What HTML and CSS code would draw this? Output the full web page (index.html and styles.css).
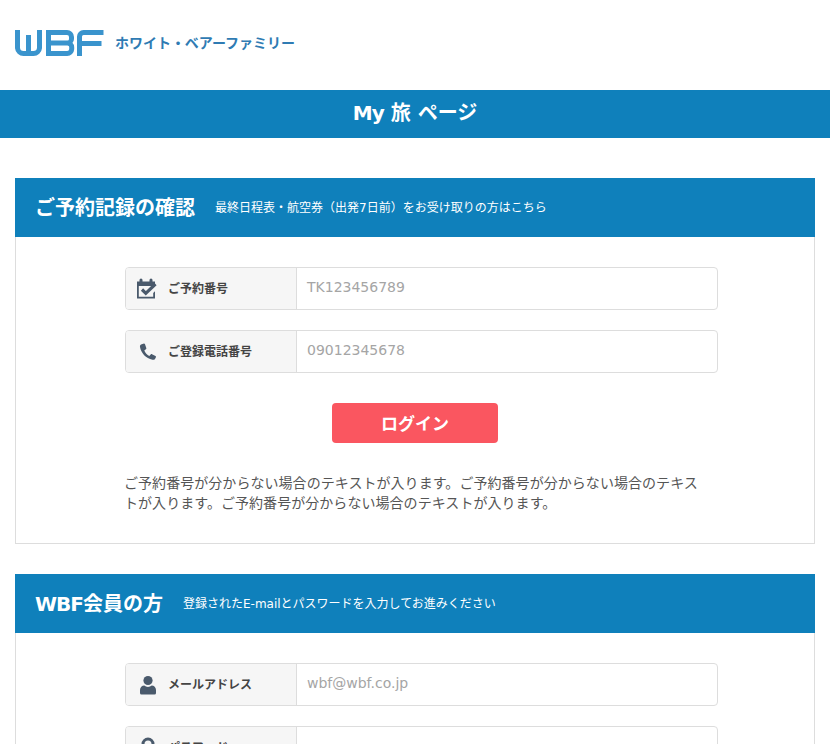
FILE: index.html
```html
<!DOCTYPE html>
<html lang="ja">
<head>
<meta charset="utf-8">
<title>My 旅 ページ</title>
<link rel="stylesheet" href="styles.css">
</head>
<body>
<header class="site-header">
  <svg class="logo" viewBox="0 0 89 26" width="89" height="26" aria-label="WBF">
    <g fill="none" stroke="#3a94cd" stroke-width="5">
      <path d="M2.500 0V18a6 6 0 0 0 6 5.500h10a6 6 0 0 0 6-5.500V0M13.500 5V23"/>
      <path d="M33.500 0V26M33.500 2.500H52a4.500 4.500 0 0 1 4.500 4.500v2a4 4 0 0 1-4 4H33.500M52.500 13a4.200 4.200 0 0 1 4.200 4.200v2a4.500 4.500 0 0 1-4.500 4.300H33.500"/>
      <path d="M88.500 2.500H68.500a4 4 0 0 0-4 4V26M64.500 13.500H86.500"/>
    </g>
  </svg>
  <span class="brand">ホワイト・ベアーファミリー</span>
</header>
<h1 class="page-title"><span class="latin">My</span> 旅 ページ</h1>
<main class="content">
  <section class="card">
    <div class="card-head">
      <h2>ご予約記録の確認</h2>
      <p>最終日程表・航空券（出発7日前）をお受け取りの方はこちら</p>
    </div>
    <div class="card-body">
      <div class="field">
        <div class="field-label">
          <svg class="icon" viewBox="1 0 22 22" width="22" height="22"><path fill="#4a5a6c" d="M1 3.500h2.500V2a1.500 1.500 0 0 1 3 0v1.500h7V2a1.500 1.500 0 0 1 3 0v1.500H19v4h-1.800V8H2.800v10.800h14.400V15L19 13.200v7.300H1z"/><path fill="none" stroke="#4a5a6c" stroke-width="3.200" d="M6 11.500l3.800 3.800L19.500 6"/></svg>
          <span>ご予約番号</span>
        </div>
        <div class="field-value">TK123456789</div>
      </div>
      <div class="field">
        <div class="field-label">
          <svg class="icon" viewBox="0 0 22 22" width="22" height="22"><path fill="#4a5a6c" d="M4 3.500 7 2.500C7.500 2.500 7.800 2.800 8 3.200L9.300 7C9.500 7.500 9.300 8 8.900 8.300L7.300 9.500C8.300 12 10 13.800 12.300 15L13.700 13.500C14 13.100 14.600 13 15 13.200L18.500 15C18.900 15.200 19.100 15.700 19 16.100L18 18C17.500 18.700 16.500 19 15.500 18.800 9 17.500 4 12 3 6 2.800 5 3.200 4 4 3.500Z"/></svg>
          <span>ご登録電話番号</span>
        </div>
        <div class="field-value">09012345678</div>
      </div>
      <button class="login" type="button">ログイン</button>
      <p class="note">ご予約番号が分からない場合のテキストが入ります。ご予約番号が分からない場合のテキストが入ります。ご予約番号が分からない場合のテキストが入ります。</p>
    </div>
  </section>
  <section class="card">
    <div class="card-head member">
      <h2><span class="latin">WBF</span>会員の方</h2>
      <p>登録されたE-mailとパスワードを入力してお進みください</p>
    </div>
    <div class="card-body">
      <div class="field">
        <div class="field-label">
          <svg class="icon" viewBox="0 0 22 22" width="22" height="22"><circle cx="11" cy="6.500" r="4.600" fill="#4a5a6c"/><path fill="#4a5a6c" d="M4.500 20.500A1.500 1.500 0 0 1 3 19v-3c0-2.500 2-4.500 4.300-4.500 1 .9 2.300 1.400 3.700 1.400s2.700-.5 3.700-1.400c2.300 0 4.300 2 4.300 4.500v3a1.500 1.500 0 0 1-1.500 1.500z"/></svg>
          <span>メールアドレス</span>
        </div>
        <div class="field-value">wbf@wbf.co.jp</div>
      </div>
      <div class="field">
        <div class="field-label">
          <svg class="icon" viewBox="0 0 22 22" width="22" height="22"><circle cx="11" cy="7" r="5" fill="none" stroke="#4a5a6c" stroke-width="3"/><rect x="3" y="10" width="16" height="11" rx="2" fill="#4a5a6c"/></svg>
          <span>パスワード</span>
        </div>
        <div class="field-value"></div>
      </div>
    </div>
  </section>
</main>
</body>
</html>
```
FILE: styles.css
```css
* { box-sizing: border-box; }
html, body { margin: 0; padding: 0; overflow: hidden; height: 744px; }
body {
  background: #fff;
  color: #444;
  font-family: "DejaVu Sans", "Noto Sans CJK JP", sans-serif;
}
.site-header {
  height: 90px;
  padding: 30px 15px 0;
  display: flex;
  align-items: flex-start;
  gap: 11px;
}
.logo { display: block; flex: none; }
.brand {
  font-family: "Noto Sans CJK JP", sans-serif;
  font-weight: 700;
  font-size: 14px;
  line-height: 25px;
  color: #2f7bb3;
  letter-spacing: -.03px;
}
.page-title {
  margin: 0;
  height: 48px;
  background: #0f80bb;
  color: #fff;
  font-size: 20px;
  font-weight: 700;
  line-height: 46px;
  text-align: center;
}
.latin { letter-spacing: -1px; }
.content { padding: 40px 15px 0; display: flex; flex-direction: column; gap: 30px; }
.card { border: 1px solid #ddd; border-top: 0; }
.card-head {
  height: 59px;
  margin: 0 -1px;
  padding: 0 20px;
  background: #0f80bb;
  color: #fff;
  display: flex;
  align-items: center;
  gap: 20px;
}
.card-head h2 { margin: 0; font-size: 20px; font-weight: 700; line-height: 56px; }
.card-head p { margin: 0; font-size: 12px; line-height: 56px; }
.card-body { padding: 30px 0; display: flex; flex-direction: column; }
.field {
  height: 43px;
  width: 593px;
  margin: 0 0 20px 109px;
  display: flex;
  border: 1px solid #ddd;
  border-radius: 4px;
}
.field-label {
  width: 171px;
  flex: none;
  background: #f6f6f6;
  border-right: 1px solid #ddd;
  border-radius: 3px 0 0 3px;
  padding: 0 0 0 11px;
  display: flex;
  align-items: center;
  gap: 9px;
  font-size: 12px;
  font-weight: 700;
  color: #444;
}
.field-label span { position: relative; top: -1px; }
.icon { flex: none; }
.field-value { padding-left: 10px; font-size: 14px; line-height: 39px; color: #a5a5a5; flex: 1; }
.login {
  align-self: center;
  width: 166px;
  height: 40px;
  margin: 10px 0 30px;
  padding: 0 0 2px;
  border: 0;
  border-radius: 4px;
  background: #fa5660;
  color: #fff;
  font-family: inherit;
  font-size: 17px;
  font-weight: 700;
}
.note { margin: 0 0 0 108px; width: 584px; font-size: 14px; line-height: 20px; letter-spacing: .05px; color: #555; }
```
